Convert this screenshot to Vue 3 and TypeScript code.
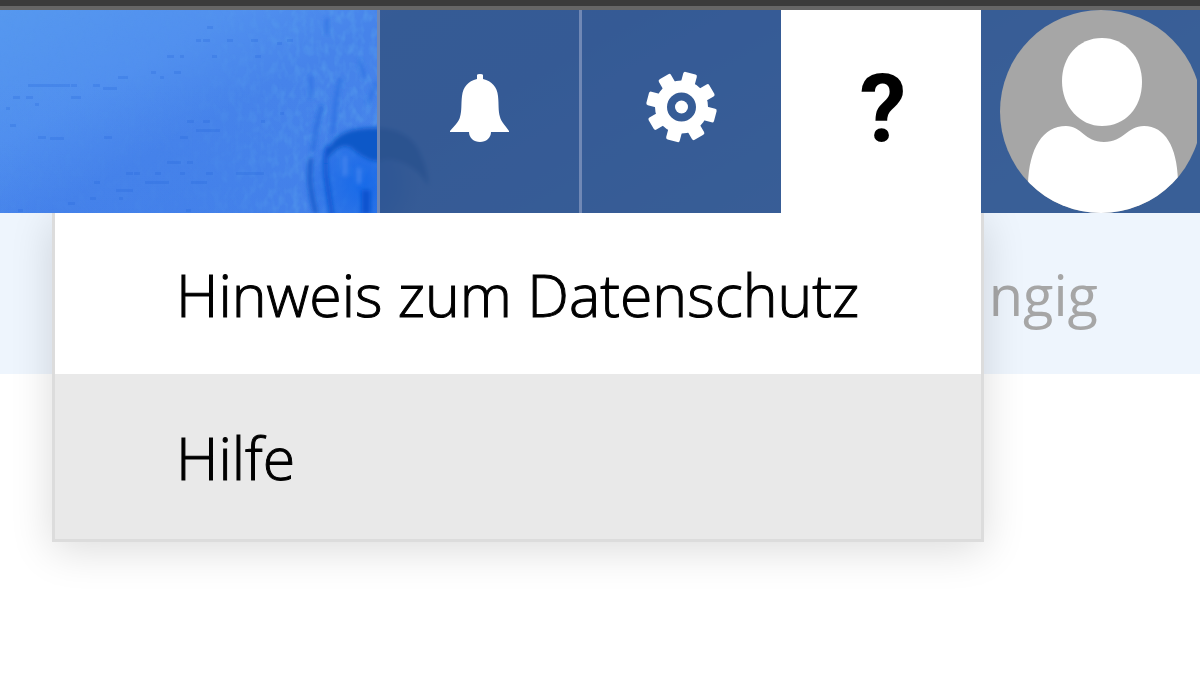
<script setup lang="ts">
import { ref } from 'vue'

interface MenuEntry {
  id: string
  label: string
}

const entries: MenuEntry[] = [
  { id: 'privacy', label: 'Hinweis zum Datenschutz' },
  { id: 'help', label: 'Hilfe' },
]
const active = ref('help')
const open = ref(true)

// x, y, width of the faint horizontal flecks in the banner artwork
const flecks: number[][] = [
  [196, 39, 5], [203, 39, 7], [227, 39, 6], [251, 39, 7], [287, 39, 6], [207, 26, 6],
  [167, 55, 7], [180, 55, 4], [212, 55, 5], [255, 55, 6], [277, 42, 5],
  [151, 71, 5], [174, 71, 7], [160, 76, 4], [71, 84, 6], [93, 84, 7], [103, 87, 14],
  [28, 84, 42], [118, 76, 10], [13, 96, 7], [26, 96, 7], [71, 96, 10], [35, 103, 4],
  [6, 107, 4], [10, 124, 6], [187, 120, 7], [203, 120, 7], [196, 129, 24],
  [38, 136, 8], [50, 137, 14], [104, 136, 8], [180, 136, 8], [167, 161, 14], [187, 161, 6],
  [126, 172, 7], [134, 172, 6], [155, 172, 6], [180, 172, 5], [206, 172, 7], [236, 172, 28],
  [94, 181, 6], [145, 181, 24], [191, 181, 16], [116, 189, 17], [119, 197, 4],
  [90, 197, 6], [68, 202, 7], [18, 209, 5], [186, 209, 5], [261, 120, 4], [280, 112, 4],
]
</script>

<template>
  <div class="page">
    <header class="bar">
      <svg class="art" viewBox="0 10 1200 203" preserveAspectRatio="none" aria-hidden="true">
        <defs>
          <linearGradient id="sky" x1="0" y1="0" x2="1" y2="0.3">
            <stop offset="0" stop-color="#5698ef" />
            <stop offset="0.18" stop-color="#5190ef" />
            <stop offset="0.31" stop-color="#4683ea" />
            <stop offset="0.5" stop-color="#4482ea" />
            <stop offset="1" stop-color="#5c9cf2" />
          </linearGradient>
          <linearGradient id="low" x1="0" y1="0" x2="0" y2="1">
            <stop offset="0.3" stop-color="#2e68e8" stop-opacity="0" />
            <stop offset="1" stop-color="#2e68e8" stop-opacity="0.06" />
          </linearGradient>
          <radialGradient id="deep">
            <stop offset="0" stop-color="#1166e8" stop-opacity="0.9" />
            <stop offset="0.6" stop-color="#1b69e6" stop-opacity="0.6" />
            <stop offset="1" stop-color="#2c72e8" stop-opacity="0" />
          </radialGradient>
          <filter id="soft" x="-20%" y="-20%" width="140%" height="140%">
            <feGaussianBlur stdDeviation="2" />
          </filter>
          <filter id="grain" x="0" y="0" width="100%" height="100%">
            <feTurbulence type="fractalNoise" baseFrequency="0.14 0.09" numOctaves="2" seed="4" />
            <feColorMatrix values="0 0 0 0 0.1  0 0 0 0 0.36  0 0 0 0 0.85  1.1 0 0 0 -0.45" />
          </filter>
          <linearGradient id="fade">
            <stop offset="0.5" stop-color="#fff" stop-opacity="0.15" />
            <stop offset="0.85" stop-color="#fff" stop-opacity="1" />
          </linearGradient>
          <mask id="grainmask"><rect x="0" y="10" width="380" height="203" fill="url(#fade)" /></mask>
        </defs>
        <rect y="10" width="1200" height="203" fill="url(#sky)" />
        <rect y="10" width="1200" height="203" fill="url(#low)" />
        <g mask="url(#grainmask)">
          <rect y="10" width="380" height="203" filter="url(#grain)" />
        </g>
        <ellipse cx="362" cy="184" rx="60" ry="62" fill="url(#deep)" />
        <g filter="url(#soft)" fill="none">
          <path d="M328 150C336 132 352 128 376 128C398 128 416 137 422 158C426 166 428 176 428 186C420 170 404 160 386 159C374 166 360 155 350 147C341 144 334 150 328 158Z" fill="#0f58c8" />
          <path d="M328 146C322 166 328 184 332 216" stroke="#0d55cf" stroke-width="4" />
          <path d="M311 158C308 178 311 194 316 214" stroke="#1459c9" stroke-width="4" />
          <path d="M322 106C315 124 316 138 312 152" stroke="#2267dc" stroke-width="3" />
          <path d="M341 78C334 96 336 116 332 134" stroke="#2d71e3" stroke-width="4" />
          <path d="M327 18V34M359 60L365 78M376 82L368 104M311 76V98" stroke="#2d71e3" stroke-width="3" />
          <path d="M366 190V214" stroke="#0752cf" stroke-width="9" />
          <path d="M359 168V184M345 156V176" stroke="#4385ef" stroke-width="4" />
        </g>
        <g fill="#2567dd" opacity="0.26">
          <rect v-for="(f, i) in flecks" :key="i" :x="f[0]" :y="f[1]" :width="f[2]" height="3" />
        </g>
      </svg>

      <div class="banner"></div>
      <button class="tool" type="button" aria-label="Benachrichtigungen">
        <svg class="icon" viewBox="0 0 80 80" aria-hidden="true">
          <path fill="#fff" d="M37 7Q37 6 40 6Q43 6 43 7V11C52 13 57 19 58 28C59 37 58 42 60 49C61 54 66 58 69 63V64H51C51 70 46 74 40 74C34 74 29 70 29 64H10V63C14 58 19 54 20 49C22 42 21 36 22 28C23 19 28 13 37 11Z" />
        </svg>
      </button>
      <button class="tool" type="button" aria-label="Einstellungen">
        <svg class="icon" viewBox="0 0 80 80" aria-hidden="true">
          <g transform="translate(39.5 39) rotate(15)" fill="#fff">
            <rect v-for="n in 8" :key="n" x="-7" y="-35" width="14" height="18" rx="2" :transform="`rotate(${n * 45})`" />
          </g>
          <circle cx="39.5" cy="39" r="20.5" fill="none" stroke="#fff" stroke-width="12" />
          <circle cx="39.5" cy="39" r="6.5" fill="#fff" />
        </svg>
      </button>
      <button class="tool help" type="button" aria-label="Hilfe" :aria-expanded="open" @click="open = !open">?</button>
      <button class="account" type="button" aria-label="Konto">
        <svg class="avatar" viewBox="0 0 197 203" aria-hidden="true">
          <clipPath id="disc"><ellipse cx="101" cy="101.5" rx="101" ry="101.5" /></clipPath>
          <g clip-path="url(#disc)">
            <rect width="197" height="203" fill="#a6a6a6" />
            <path fill="#fff" d="M102 28C125 28 142 47 142 72C142 98 125 116 102 116C80 116 62 97 62 71C62 47 78 28 102 28Z" />
            <path fill="#fff" d="M28 175C29 138 43 116 66 116C82 116 84 132 104 132C124 132 127 116 144 116C165 116 177 137 178 170L178 203H28Z" />
          </g>
        </svg>
      </button>

      <nav v-if="open" class="menu" aria-label="Hilfemenü">
        <button
          v-for="e in entries"
          :key="e.id"
          type="button"
          class="entry"
          :class="{ active: active === e.id }"
          @mouseenter="active = e.id"
        >{{ e.label }}</button>
      </nav>
    </header>
    <div class="strip"><span>ngig</span></div>
  </div>
</template>

<style>
body {
  margin: 0;
  background: #fff;
}
</style>

<style scoped>
.page {
  min-height: 100vh;
  overflow: hidden;
  box-sizing: border-box;
  border-top: 6px solid #3b3b3b;
  font-family: "Open Sans", "Noto Sans", sans-serif;
}
button {
  margin: 0;
  padding: 0;
  border: 0;
  font: inherit;
  color: #000;
  cursor: pointer;
}
.bar {
  position: relative;
  z-index: 1;
  display: flex;
  height: 203px;
  border-top: 4px solid #666;
}
.art {
  position: absolute;
  inset: 0;
  width: 100%;
  height: 100%;
}
.banner {
  flex: 1;
}
.tool,
.account {
  position: relative;
  display: flex;
  align-items: center;
  background: rgba(50, 82, 130, 0.82);
}
.tool {
  box-sizing: border-box;
  width: 202px;
  justify-content: center;
  border-left: 3px solid #7088b5;
}
.icon {
  width: 80px;
  height: 80px;
}
.tool .icon {
  margin-bottom: 7px;
}
.tool.help {
  width: 200px;
  border-left: 0;
  background: #fff;
  font-family: Roboto, sans-serif;
  font-size: 94px;
  font-weight: 700;
  line-height: 120px;
  padding: 0 0 6px 4px;
}
.account {
  width: 219px;
  padding-left: 19px;
}
.avatar {
  width: 197px;
  height: 203px;
}
.menu {
  position: absolute;
  top: 100%;
  right: 216px;
  width: 926px;
  border: 3px solid #dcdcdc;
  border-top: 0;
  background: #fff;
  box-shadow: 0 8px 40px rgba(0, 0, 0, 0.14);
  clip-path: inset(0 -60px -80px -60px);
}
.entry {
  display: block;
  width: 100%;
  height: 161px;
  padding-left: 121px;
  background: #fff;
  text-align: left;
  font-size: 59px;
  font-weight: 300;
  -webkit-text-stroke: 1px #000;
}
.entry.active {
  height: 165px;
  background: #e9e9e9;
}
.strip {
  display: flex;
  align-items: center;
  justify-content: flex-end;
  height: 161px;
  padding-right: 102px;
  background: #eef5fd;
  color: #a6a6a6;
  font-size: 56px;
}
</style>
